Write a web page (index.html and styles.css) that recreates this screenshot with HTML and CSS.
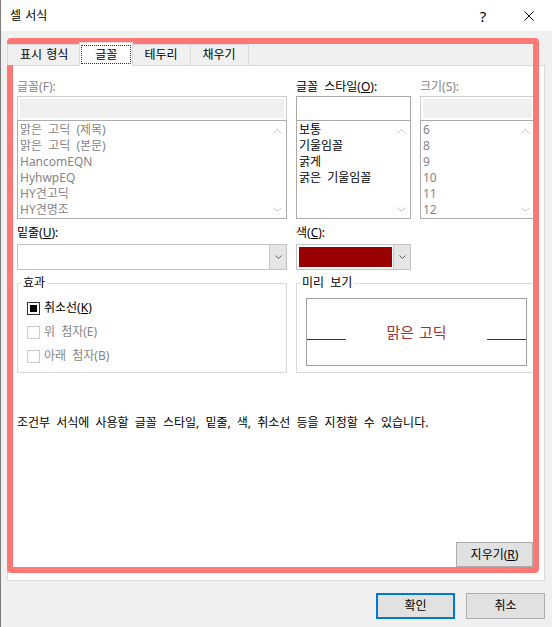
FILE: index.html
```html
<!DOCTYPE html>
<html lang="ko">
<head>
<meta charset="utf-8">
<title>셀 서식</title>
<link rel="stylesheet" href="styles.css">
</head>
<body>
<div class="window">
  <header class="titlebar">
    <span class="title">셀 서식</span>
    <span class="caption-btn help">?</span>
    <span class="caption-btn close">
      <svg width="10" height="10" viewBox="0 0 10 10"><path d="M0.5 0.5L9.5 9.5M9.5 0.5L0.5 9.5" stroke="#000" stroke-width="1" fill="none"/></svg>
    </span>
  </header>

  <main class="content">
    <nav class="tabs">
      <div class="tab first">표시 형식</div>
      <div class="tab active"><span class="focus">글꼴</span></div>
      <div class="tab">테두리</div>
      <div class="tab last">채우기</div>
    </nav>

    <section class="panel">
      <div class="fields">
        <div class="field">
          <div class="label disabled">글꼴(F):</div>
          <div class="textbox disabled"><div class="fill"></div></div>
          <div class="listbox">
            <ul class="items disabled">
              <li>맑은 고딕 (제목)</li>
              <li>맑은 고딕 (본문)</li>
              <li>HancomEQN</li>
              <li>HyhwpEQ</li>
              <li>HY견고딕</li>
              <li>HY견명조</li>
            </ul>
            <div class="scroll">
              <svg width="9" height="5" viewBox="0 0 9 5"><polyline points="0.5,4.5 4.5,0.5 8.5,4.5" fill="none" stroke="#c4c4c4"/></svg>
              <svg width="9" height="5" viewBox="0 0 9 5"><polyline points="0.5,0.5 4.5,4.5 8.5,0.5" fill="none" stroke="#c4c4c4"/></svg>
            </div>
          </div>
        </div>

        <div class="field">
          <div class="label">글꼴 스타일(<u>O</u>):</div>
          <div class="textbox"></div>
          <div class="listbox">
            <ul class="items">
              <li>보통</li>
              <li>기울임꼴</li>
              <li>굵게</li>
              <li>굵은 기울임꼴</li>
            </ul>
            <div class="scroll">
              <svg width="9" height="5" viewBox="0 0 9 5"><polyline points="0.5,4.5 4.5,0.5 8.5,4.5" fill="none" stroke="#c4c4c4"/></svg>
              <svg width="9" height="5" viewBox="0 0 9 5"><polyline points="0.5,0.5 4.5,4.5 8.5,0.5" fill="none" stroke="#c4c4c4"/></svg>
            </div>
          </div>
        </div>

        <div class="field">
          <div class="label disabled">크기(S):</div>
          <div class="textbox disabled"><div class="fill"></div></div>
          <div class="listbox">
            <ul class="items disabled">
              <li>6</li>
              <li>8</li>
              <li>9</li>
              <li>10</li>
              <li>11</li>
              <li>12</li>
            </ul>
            <div class="scroll">
              <svg width="9" height="5" viewBox="0 0 9 5"><polyline points="0.5,4.5 4.5,0.5 8.5,4.5" fill="none" stroke="#c4c4c4"/></svg>
              <svg width="9" height="5" viewBox="0 0 9 5"><polyline points="0.5,0.5 4.5,4.5 8.5,0.5" fill="none" stroke="#c4c4c4"/></svg>
            </div>
          </div>
        </div>

        <div class="field row2">
          <div class="label">밑줄(<u>U</u>):</div>
          <div class="combo">
            <div class="combo-value"></div>
            <div class="dropbtn"><svg width="7" height="4" viewBox="0 0 7 4"><polyline points="0.5,0.5 3.5,3.5 6.5,0.5" fill="none" stroke="#606060"/></svg></div>
          </div>
        </div>

        <div class="field row2">
          <div class="label">색(<u>C</u>):</div>
          <div class="combo">
            <div class="swatch"></div>
            <div class="dropbtn"><svg width="7" height="4" viewBox="0 0 7 4"><polyline points="0.5,0.5 3.5,3.5 6.5,0.5" fill="none" stroke="#606060"/></svg></div>
          </div>
        </div>

        <fieldset class="group effects">
          <legend>효과</legend>
          <div class="check">
            <span class="box checked"><span class="mark"></span></span>
            <span>취소선(<u>K</u>)</span>
          </div>
          <div class="check disabled">
            <span class="box"></span>
            <span>위 첨자(E)</span>
          </div>
          <div class="check disabled">
            <span class="box"></span>
            <span>아래 첨자(B)</span>
          </div>
        </fieldset>

        <fieldset class="group preview-group">
          <legend>미리 보기</legend>
          <div class="preview">
            <span class="baseline"></span>
            <span class="sample">맑은 고딕</span>
            <span class="baseline"></span>
          </div>
        </fieldset>
      </div>

      <p class="desc">조건부 서식에 사용할 글꼴 스타일, 밑줄, 색, 취소선 등을 지정할 수 있습니다.</p>

      <button class="btn clear" type="button">지우기(<u>R</u>)</button>
    </section>
  </main>

  <footer class="buttons">
    <button class="btn default" type="button">확인</button>
    <button class="btn" type="button">취소</button>
  </footer>

  <div class="highlight"></div>
</div>
</body>
</html>
```

FILE: styles.css
```css
* {
  box-sizing: border-box;
}

html,
body {
  margin: 0;
  padding: 0;
}

body {
  width: 552px;
  height: 627px;
  overflow: hidden;
  background: #f0f0f0;
  font-family: "Noto Sans", "Noto Sans CJK KR", sans-serif;
  font-size: 12px;
  line-height: 16px;
  word-spacing: 3px;
  color: #000;
}

.window {
  position: relative;
  width: 552px;
  height: 627px;
  border-left: 1px solid #7a7a7a;
  background: #f0f0f0;
  display: flex;
  flex-direction: column;
}

/* title bar */
.titlebar {
  flex: none;
  height: 31px;
  background: #fff;
  display: flex;
  align-items: center;
  word-spacing: 1px;
}

.title {
  flex: 1;
  padding-left: 9px;
}

.caption-btn {
  width: 46px;
  height: 31px;
  display: flex;
  align-items: center;
  justify-content: center;
}

.help {
  font-size: 15px;
}

/* tabs */
.content {
  padding: 11px 7px 0 6px;
}

.tabs {
  display: flex;
  align-items: flex-end;
  height: 23px;
  position: relative;
  z-index: 1;
  word-spacing: 1px;
}

.tab {
  height: 21px;
  padding: 0 12px;
  border: 1px solid #d9d9d9;
  border-bottom: 0;
  background: #f0f0f0;
  line-height: 20px;
  white-space: nowrap;
}

.tab.first {
  padding: 0 12px;
}

.tab.last {
  margin-left: -1px;
}

.tab.active {
  height: 24px;
  margin: 0 -2px -1px -2px;
  padding: 2px 1px 1px;
  background: #fff;
  position: relative;
}

.focus {
  display: block;
  height: 19px;
  padding: 0 13px;
  border: 1px dotted #333;
  line-height: 17px;
}

/* panel */
.panel {
  height: 516px;
  border: 1px solid #d9d9d9;
  background: #fff;
  padding: 13px 9px 13px 9px;
  display: flex;
  flex-direction: column;
}

.fields {
  display: grid;
  grid-template-columns: 270px 115px 115px;
  column-gap: 9px;
}

.label {
  height: 16px;
  margin-bottom: 1px;
  white-space: nowrap;
}

.disabled {
  color: #858585;
}

.textbox {
  height: 25px;
  border: 1px solid #a9a9a9;
  background: #fff;
}

.textbox.disabled {
  border-color: #cdcdcd;
  padding: 2px;
}

.textbox .fill {
  height: 100%;
  background: #f0f0f0;
}

.listbox {
  height: 99px;
  margin-top: -1px;
  border: 1px solid #ababab;
  display: flex;
}

.items {
  flex: 1;
  margin: 0;
  padding: 1px 0 0 2px;
  list-style: none;
  white-space: nowrap;
  overflow: hidden;
}

.items li {
  height: 16px;
  line-height: 16px;
}

.scroll {
  width: 17px;
  flex: none;
  display: flex;
  flex-direction: column;
  justify-content: space-between;
  align-items: center;
  padding: 8px 0 6px;
}

.scroll svg {
  display: block;
}

.row2 {
  margin-top: 6px;
}

.row2 .label {
  margin-bottom: 3px;
}

.combo {
  height: 26px;
  border: 1px solid #c3c3c3;
  background: #fff;
  display: flex;
}

.combo-value {
  flex: 1;
}

.swatch {
  flex: 1;
  margin: 2px 1px 2px 2px;
  background: #990000;
}

.dropbtn {
  width: 17px;
  flex: none;
  background: #e5e5e5;
  border-left: 1px solid #c8c8c8;
  display: flex;
  align-items: center;
  justify-content: center;
}

.dropbtn svg {
  display: block;
}

/* group boxes */
.group {
  margin: 5px 0 0;
  min-width: 0;
  border: 1px solid #dcdcdc;
}

.group legend {
  margin-left: -6px;
  padding: 0 2px;
  line-height: 16px;
}

.effects {
  grid-column: 1;
  padding: 5px 0 4px 9px;
}

.preview-group {
  grid-column: 2 / span 2;
  padding: 7px 7px 6px 9px;
}

.check {
  height: 24px;
  display: flex;
  align-items: center;
  gap: 4px;
}

.box {
  width: 13px;
  height: 13px;
  border: 1px solid #cccccc;
  background: #fff;
  flex: none;
}

.box.checked {
  border-color: #333;
  padding: 2px;
}

.mark {
  display: block;
  width: 7px;
  height: 7px;
  background: #000;
}

.preview {
  height: 68px;
  border: 1px solid #a0a0a0;
  display: flex;
  align-items: center;
  justify-content: space-between;
}

.baseline {
  width: 39px;
  height: 1px;
  margin-top: 14px;
  background: #333;
}

.sample {
  font-size: 15px;
  line-height: 20px;
  word-spacing: 1px;
  color: #a83232;
}

.desc {
  margin: 42px 0 0;
  white-space: nowrap;
}

/* buttons */
.btn {
  font-family: "Noto Sans", "Noto Sans CJK KR", sans-serif;
  font-size: 12px;
  line-height: 16px;
  color: #000;
  background: #e1e1e1;
  border: 1px solid #adadad;
  padding: 0;
  margin: 0;
}

.clear {
  margin-top: auto;
  align-self: flex-end;
  margin-right: 2px;
  width: 77px;
  height: 25px;
}

.buttons {
  flex: none;
  display: flex;
  justify-content: flex-end;
  gap: 11px;
  padding: 12px 7px 0 0;
}

.buttons .btn {
  width: 79px;
  height: 26px;
}

.btn.default {
  border-color: #0078d7;
  box-shadow: inset 0 0 0 1px #0078d7;
}

/* annotation overlay */
.highlight {
  position: absolute;
  left: 6px;
  top: 38px;
  width: 532px;
  height: 535px;
  border: 6px solid #ff7878;
  border-radius: 4px;
  pointer-events: none;
}
```
